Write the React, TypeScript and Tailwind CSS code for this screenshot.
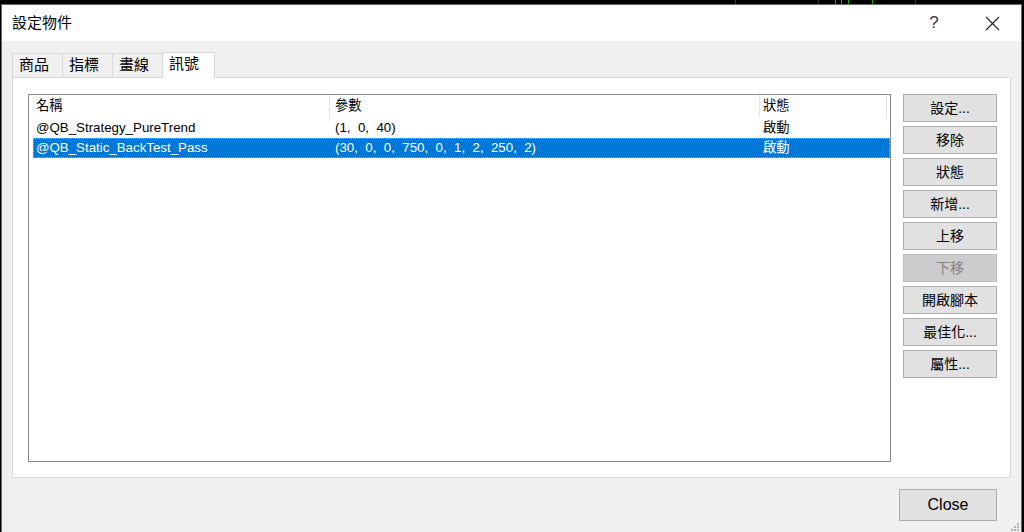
import React from 'react'

const font = { fontFamily: '"Segoe UI", "Liberation Sans", "Noto Sans CJK TC", sans-serif' }

const tabs = ['商品', '指標', '畫線', '訊號']

const rows = [
  { name: '@QB_Strategy_PureTrend', params: '(1,  0,  40)', status: '啟動', selected: false },
  { name: '@QB_Static_BackTest_Pass', params: '(30,  0,  0,  750,  0,  1,  2,  250,  2)', status: '啟動', selected: true },
]

const buttons = [
  { label: '設定...' },
  { label: '移除' },
  { label: '狀態' },
  { label: '新增...' },
  { label: '上移' },
  { label: '下移', disabled: true },
  { label: '開啟腳本' },
  { label: '最佳化...' },
  { label: '屬性...' },
]

// chart ticks peeking out above the dialog
const ticks = [
  { x: 735, c: 'bg-[#3a3a3a]' },
  { x: 818, c: 'bg-[#3a3a3a]' },
  { x: 835, c: 'bg-[#1fa51f]' },
  { x: 841, c: 'bg-[#1fa51f]' },
  { x: 848, c: 'bg-[#1fa51f]' },
  { x: 872, c: 'bg-[#1fa51f]' },
  { x: 915, c: 'bg-[#3a3a3a]' },
]

export default function App() {
  return (
    <div className="w-[1024px] h-[532px] overflow-hidden bg-black pt-[4px] pl-[1px] pr-[2px] flex flex-col relative" style={font}>
      {ticks.map(t => (
        <div key={t.x} className={`absolute top-0 h-[4px] w-[1px] ${t.c}`} style={{ left: t.x }} />
      ))}
      <div className="flex-1 flex flex-col border-l border-r border-t border-[#6b6b6b] bg-[#f0f0f0] min-h-0">
        {/* title bar */}
        <div className="h-[36px] bg-white flex items-center pl-[10px] text-[15px] text-black shrink-0">
          <span className="flex-1">設定物件</span>
          <span className="w-[58px] text-center text-[17px] text-[#333]">?</span>
          <span className="w-[58px] flex items-center justify-center">
            <svg width="15" height="15" viewBox="0 0 15 15">
              <path d="M1 1 L14 14 M14 1 L1 14" stroke="#222" strokeWidth="1.1" fill="none" />
            </svg>
          </span>
        </div>

        {/* body */}
        <div className="flex-1 flex flex-col pt-[10px] px-[10px]">
          <div className="flex items-end h-[26px]">
            {tabs.map((t, i) =>
              i === 3 ? (
                <div key={t} className="h-[26px] w-[53px] bg-white border border-b-0 border-[#d9d9d9] pl-[6px] text-[15px] leading-[22px] text-black relative z-10 -mb-[1px]">
                  {t}
                </div>
              ) : (
                <div key={t} className="h-[24px] w-[51px] -mr-[1px] bg-[#f0f0f0] border border-b-0 border-[#d9d9d9] pl-[6px] text-[15px] text-black leading-[22px]">
                  {t}
                </div>
              ),
            )}
          </div>

          <div className="h-[401px] bg-white border border-[#d9d9d9] flex pt-[16px] pl-[15px] pr-[13px] gap-[12px]">
            {/* list view */}
            <div className="w-[863px] h-[368px] border border-[#828790] flex flex-col pl-[4px] text-[13.3px] text-black">
              <div className="h-[23px] flex items-center shrink-0">
                <div className="w-[297px] h-full pl-[3px] leading-[21px] border-r border-[#e5e5e5]">名稱</div>
                <div className="w-[430px] h-full pl-[5px] leading-[21px] border-r border-[#e5e5e5]">參數</div>
                <div className="w-[127px] h-full pl-[3px] leading-[21px] border-r border-[#e5e5e5]">狀態</div>
              </div>
              {rows.map(r => (
                <div
                  key={r.name}
                  className={`h-[20px] flex items-center leading-[18px] ${r.selected ? 'bg-[#0078d7] text-white outline-1 outline-dotted outline-[#f0a050] -outline-offset-1' : ''}`}
                >
                  <div className="w-[297px] pl-[3px] whitespace-pre">{r.name}</div>
                  <div className="w-[430px] pl-[5px] whitespace-pre">{r.params}</div>
                  <div className="w-[127px] pl-[3px]">{r.status}</div>
                </div>
              ))}
            </div>

            {/* side buttons */}
            <div className="flex flex-col gap-[4px]">
              {buttons.map(b => (
                <div
                  key={b.label}
                  className={`w-[94px] h-[28px] flex items-center justify-center text-[14px] border ${
                    b.disabled ? 'bg-[#cccccc] border-[#bfbfbf] text-[#838383]' : 'bg-[#e1e1e1] border-[#adadad] text-black'
                  }`}
                >
                  {b.label}
                </div>
              ))}
            </div>
          </div>

          {/* footer */}
          <div className="flex justify-end pt-[11px] pr-[14px] relative flex-1">
            <div className="w-[98px] h-[32px] bg-[#e1e1e1] border border-[#adadad] flex items-center justify-center text-[16px] text-black">
              Close
            </div>
            <div className="absolute right-[-8px] bottom-[1px] grid grid-cols-3 gap-[1px]">
              {[0, 0, 1, 0, 1, 1, 1, 1, 1].map((v, i) => (
                <div key={i} className={`w-[2px] h-[2px] ${v ? 'bg-[#b0b0b0]' : ''}`} />
              ))}
            </div>
          </div>
        </div>
      </div>
    </div>
  )
}
